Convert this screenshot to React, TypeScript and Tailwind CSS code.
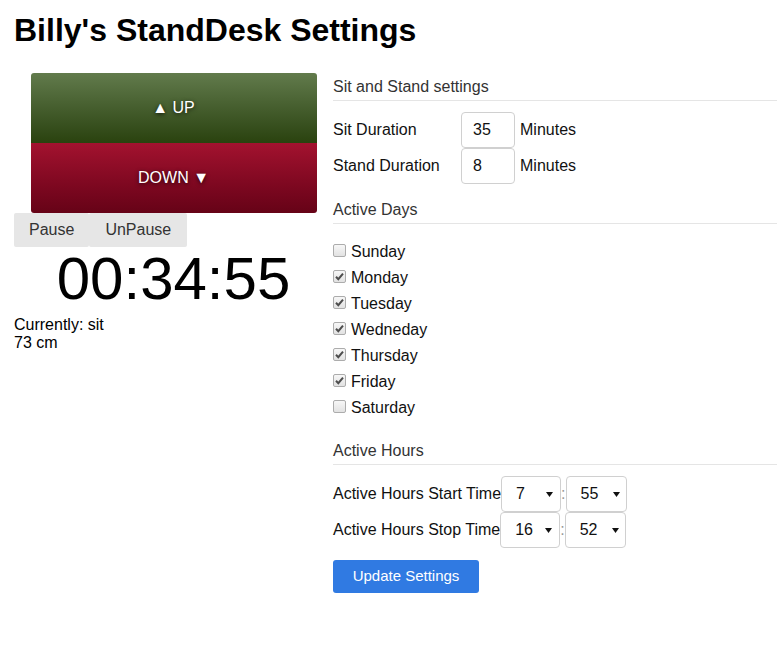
import React from "react";

const font = { fontFamily: '"Liberation Sans", Arial, sans-serif' };

function Heading({ children, className }: { children: React.ReactNode; className: string }) {
  return (
    <div className={`${className} border-b border-[#e5e5e5] pb-[4px] text-[16px] leading-[18px] text-[#333]`}>
      {children}
    </div>
  );
}

function Check({ checked, label }: { checked: boolean; label: string }) {
  return (
    <div className="flex h-[26px] items-center">
      <span className="mb-[3px] flex h-[13px] w-[13px] items-center justify-center rounded-[2px] border border-[#acacac] bg-linear-to-b from-[#f7f7f7] to-[#e2e2e2]">
        {checked && (
          <svg width="11" height="11" viewBox="0 0 11 11">
            <path d="M2 5.8 L4.3 8.2 L9 2.6" fill="none" stroke="#4d4d4d" strokeWidth="2" />
          </svg>
        )}
      </span>
      <span className="ml-[5px] text-[16px] leading-[18px] text-[#111]">{label}</span>
    </div>
  );
}

function Select({ value, w, pr }: { value: string; w: string; pr: string }) {
  return (
    <div
      role="combobox"
      className={`${w} ${pr} flex h-[36px] items-center justify-between rounded-[4px] border border-[#d0d0d0] bg-white pl-[14px] text-[16px] text-[#111]`}
    >
      <span>{value}</span>
      <svg width="7" height="5" viewBox="0 0 7 5">
        <path d="M0 0 H7 L3.5 5 Z" fill="#111" />
      </svg>
    </div>
  );
}

export default function App() {
  const days: [string, boolean][] = [
    ["Sunday", false],
    ["Monday", true],
    ["Tuesday", true],
    ["Wedneday", true],
    ["Thursday", true],
    ["Friday", true],
    ["Saturday", false],
  ];
  return (
    <div style={font} className="min-h-[669px] w-[777px] bg-white pl-[14px] text-black">
      <h1 className="pt-[12px] text-[32px] font-bold leading-[37px]">Billy's StandDesk Settings</h1>
      <div className="mt-[24px] flex items-start">
        {/* left column */}
        <div className="w-[319px] shrink-0">
          <button className="mx-auto flex h-[70px] w-[286px] items-center justify-center rounded-t-[3px] bg-linear-to-b from-[#627b4c] to-[#2a420e] text-[16px] text-white [text-shadow:0_1px_4px_rgba(0,0,0,0.75)]">
            ▲ UP
          </button>
          <button className="mx-auto flex h-[70px] w-[286px] items-center justify-center rounded-b-[3px] bg-linear-to-b from-[#a3122f] to-[#660317] text-[16px] text-white [text-shadow:0_1px_4px_rgba(0,0,0,0.75)]">
            DOWN ▼
          </button>
          <div className="flex">
            <button className="h-[34px] rounded-[2px] bg-[#e6e6e6] px-[15px] text-[16px] text-[#333]">Pause</button>
            <button className="h-[34px] rounded-[2px] bg-[#e6e6e6] px-[16px] text-[16px] text-[#333]">UnPause</button>
          </div>
          <div className="mt-[2px] text-center text-[60px] leading-[60px]">00:34:55</div>
          <div className="mt-[7px] text-[16px] leading-[18px]">
            <div>Currently: sit</div>
            <div>73 cm</div>
          </div>
        </div>

        {/* right column */}
        <div className="flex-1">
          <Heading className="mt-[5px]">Sit and Stand settings</Heading>
          <div className="mt-[11px]">
            <div className="flex h-[36px] items-center text-[16px] text-[#111]">
              <span className="w-[128px]">Sit Duration</span>
              <input
                readOnly
                value="35"
                className="h-[36px] w-[54px] rounded-[4px] border border-[#d0d0d0] pl-[11px] text-[16px] text-[#111] outline-none"
              />
              <span className="ml-[5px]">Minutes</span>
            </div>
            <div className="flex h-[36px] items-center text-[16px] text-[#111]">
              <span className="w-[128px]">Stand Duration</span>
              <input
                readOnly
                value="8"
                className="h-[36px] w-[54px] rounded-[4px] border border-[#d0d0d0] pl-[11px] text-[16px] text-[#111] outline-none"
              />
              <span className="ml-[5px]">Minutes</span>
            </div>
          </div>

          <Heading className="mt-[17px]">Active Days</Heading>
          <div className="mt-[15px]">
            {days.map(([d, c]) => (
              <Check key={d} label={d} checked={c} />
            ))}
          </div>

          <Heading className="mt-[21px]">Active Hours</Heading>
          <div className="mt-[11px]">
            <div className="flex h-[36px] items-center text-[16px] text-[#111]">
              <span>Active Hours Start Time</span>
              <Select value="7" w="w-[60px]" pr="pr-[7px]" />
              <span className="text-[#999]">:</span>
              <Select value="55" w="w-[61px]" pr="pr-[6px]" />
            </div>
            <div className="flex h-[36px] items-center text-[16px] text-[#111]">
              <span>Active Hours Stop Time</span>
              <Select value="16" w="w-[60px]" pr="pr-[7px]" />
              <span className="text-[#999]">:</span>
              <Select value="52" w="w-[61px]" pr="pr-[6px]" />
            </div>
          </div>

          <button className="mt-[12px] h-[33px] w-[146px] rounded-[3px] bg-[#307ae2] text-[15px] text-white">
            Update Settings
          </button>
        </div>
      </div>
    </div>
  );
}
